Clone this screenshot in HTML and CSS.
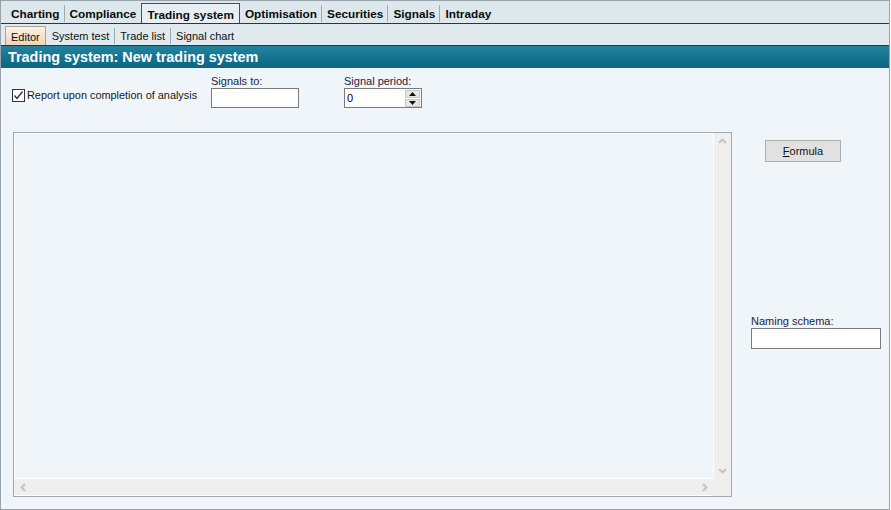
FILE: index.html
```html
<!DOCTYPE html>
<html lang="en">

<head>
    <meta charset="UTF-8">
    <title>Trading system</title>
    <link rel="stylesheet" href="styles.css">
</head>

<body>
    <main class="window">
        <nav class="tabs">
            <span class="tab">Charting</span>
            <span class="tab">Compliance</span>
            <span class="tab tab--active">Trading system</span>
            <span class="tab">Optimisation</span>
            <span class="tab">Securities</span>
            <span class="tab">Signals</span>
            <span class="tab">Intraday</span>
        </nav>
        <nav class="subtabs">
            <span class="subtab subtab--active">Editor</span>
            <span class="subtab">System test</span>
            <span class="subtab">Trade list</span>
            <span class="subtab">Signal chart</span>
        </nav>
        <h1 class="title">Trading system: New trading system</h1>

        <section class="content">
            <div class="options">
                <label class="check">
                    <span class="check__box">
                        <svg width="11" height="11" viewBox="0 0 11 11"><path d="M1.5 5.5 L4 8.5 L9.5 1.5" fill="none" stroke="#2b2b2b" stroke-width="1.3"/></svg>
                    </span>
                    Report upon completion of analysis
                </label>
                <div class="field field--signals">
                    <span class="field__label">Signals to:</span>
                    <input class="textbox textbox--signals" type="text">
                </div>
                <div class="field">
                    <span class="field__label">Signal period:</span>
                    <div class="spin">
                        <input class="spin__input" type="text" value="0">
                        <div class="spin__btns">
                            <span class="spin__btn"><svg width="7" height="4" viewBox="0 0 7 4"><path d="M0 4 L3.5 0 L7 4 Z" fill="#111"/></svg></span>
                            <span class="spin__btn"><svg width="7" height="4" viewBox="0 0 7 4"><path d="M0 0 L3.5 4 L7 0 Z" fill="#111"/></svg></span>
                        </div>
                    </div>
                </div>
            </div>

            <div class="main">
                <div class="editor">
                    <div class="editor__area"></div>
                    <div class="vscroll">
                        <svg width="9" height="6" viewBox="0 0 9 6"><path d="M1 5 L4.5 1.5 L8 5" fill="none" stroke="#c4c4c4" stroke-width="2"/></svg>
                        <svg width="9" height="6" viewBox="0 0 9 6"><path d="M1 1 L4.5 4.5 L8 1" fill="none" stroke="#c4c4c4" stroke-width="2"/></svg>
                    </div>
                    <div class="hscroll">
                        <svg width="6" height="9" viewBox="0 0 6 9"><path d="M5 1 L1.5 4.5 L5 8" fill="none" stroke="#c4c4c4" stroke-width="2"/></svg>
                        <svg width="6" height="9" viewBox="0 0 6 9"><path d="M1 1 L4.5 4.5 L1 8" fill="none" stroke="#c4c4c4" stroke-width="2"/></svg>
                    </div>
                    <div class="corner"></div>
                </div>
                <aside class="side">
                    <button class="btn"><u>F</u>ormula</button>
                    <div class="field field--naming">
                        <span class="field__label">Naming schema:</span>
                        <input class="textbox textbox--naming" type="text">
                    </div>
                </aside>
            </div>
        </section>
    </main>
</body>

</html>
```

FILE: styles.css
```css
* {
    box-sizing: border-box;
}

body {
    margin: 0;
    font-family: "Liberation Sans", Arial, sans-serif;
    font-size: 11px;
    color: #1b2130;
    background: #ffffff;
}

.window {
    width: 890px;
    height: 510px;
    border: 1px solid #98a3ab;
    background: #f0f5f9;
    display: flex;
    flex-direction: column;
}

/* top tabs */
.tabs {
    display: flex;
    align-items: flex-end;
    height: 23px;
    padding-left: 5px;
    background: #dde8ed;
    border-bottom: 1px solid #103f52;
}

.tab {
    position: relative;
    height: 19px;
    line-height: 21px;
    padding: 0 5px;
    font-size: 11.8px;
    font-weight: bold;
    color: #0b0b0b;
}

.tab + .tab::before {
    content: "";
    position: absolute;
    left: -1px;
    top: 1px;
    bottom: 1px;
    border-left: 1px solid #9fa9b0;
}

.tab--active {
    height: 20px;
    line-height: 22px;
    border: 1px solid #1d5e70;
    border-bottom: none;
    background: #e6eff4;
}

.tab--active::before,
.tab--active + .tab::before {
    display: none;
}

/* sub tabs */
.subtabs {
    display: flex;
    align-items: flex-end;
    height: 22px;
    padding-left: 4px;
    background: #e0eaef;
    border-bottom: 1px solid #103f52;
}

.subtab {
    position: relative;
    height: 19px;
    line-height: 21px;
    padding: 0 5px;
    color: #111;
}

.subtab + .subtab {
    margin-left: 1px;
}

.subtab + .subtab::before {
    content: "";
    position: absolute;
    left: -1px;
    top: 2px;
    bottom: 1px;
    border-left: 1px solid #9fa9b0;
}

.subtab--active {
    line-height: 20px;
    border: 1px solid #a9a49c;
    border-bottom: none;
    border-radius: 1px 1px 0 0;
    background: linear-gradient(#fdf2e6, #f2d2b2);
}

.subtab--active + .subtab::before {
    display: none;
}

.title {
    margin: 0;
    height: 22px;
    line-height: 22px;
    padding-left: 7px;
    font-size: 14.4px;
    font-weight: bold;
    color: #ffffff;
    background: linear-gradient(#23839e, #0a6583);
}

/* content */
.content {
    flex: 1;
    padding: 7px 0 0 12px;
    display: flex;
    flex-direction: column;
}

.options {
    display: flex;
    align-items: flex-end;
    height: 33px;
}

.check {
    display: flex;
    align-items: center;
    width: 199px;
    height: 20px;
    margin: 0 0 3px -1px;
    font-size: 10.9px;
    color: #161a24;
}

.check__box {
    width: 13px;
    height: 13px;
    margin-right: 2px;
    border: 1px solid #333;
    background: #fff;
    display: flex;
    align-items: center;
    justify-content: center;
}

.field {
    display: flex;
    flex-direction: column;
}

.field--signals {
    width: 133px;
}

.field__label {
    height: 13px;
    line-height: 13px;
    color: #1b2340;
}

.textbox {
    height: 20px;
    border: 1px solid #7a7a7a;
    background: #fff;
    font: inherit;
    padding: 0 3px;
    margin: 0;
}

.textbox--signals {
    width: 88px;
}

.spin {
    display: flex;
    align-items: center;
    width: 78px;
    height: 20px;
    border: 1px solid #7a7a7a;
    background: #fff;
}

.spin__input {
    flex: 1;
    width: 60px;
    height: 18px;
    border: none;
    padding: 0 2px;
    font: inherit;
    color: #000;
    background: transparent;
}

.spin__btns {
    display: flex;
    flex-direction: column;
    gap: 1px;
    margin-right: 1px;
}

.spin__btn {
    width: 15px;
    height: 8px;
    display: flex;
    align-items: center;
    justify-content: center;
    background: #e6e6e6;
    border: 1px solid #c8c8c8;
}

.main {
    display: flex;
    margin-top: 24px;
}

.editor {
    width: 719px;
    height: 365px;
    border: 1px solid #a2a8ad;
    display: grid;
    grid-template-columns: 1fr 18px;
    grid-template-rows: 1fr 18px;
}

.editor__area {
    border-top: 1px solid #fff;
    border-left: 1px solid #fff;
}

.vscroll {
    background: #efefef;
    border-left: 1px solid #fff;
    display: flex;
    flex-direction: column;
    justify-content: space-between;
    align-items: center;
    padding: 5px 0 4px;
}

.hscroll {
    background: #efefef;
    border-top: 1px solid #fff;
    border-bottom: 1px solid #fff;
    display: flex;
    justify-content: space-between;
    align-items: center;
    padding: 0 5px 0 6px;
}

.corner {
    background: #efefef;
}

.side {
    flex: 1;
    padding-left: 19px;
    display: flex;
    flex-direction: column;
}

.btn {
    width: 76px;
    height: 22px;
    margin: 8px 0 0 14px;
    padding: 0;
    font: inherit;
    color: #111;
    background: #e1e1e1;
    border: 1px solid #adadad;
}

.field--naming {
    margin-top: 153px;
}

.textbox--naming {
    width: 130px;
    height: 21px;
}
```
